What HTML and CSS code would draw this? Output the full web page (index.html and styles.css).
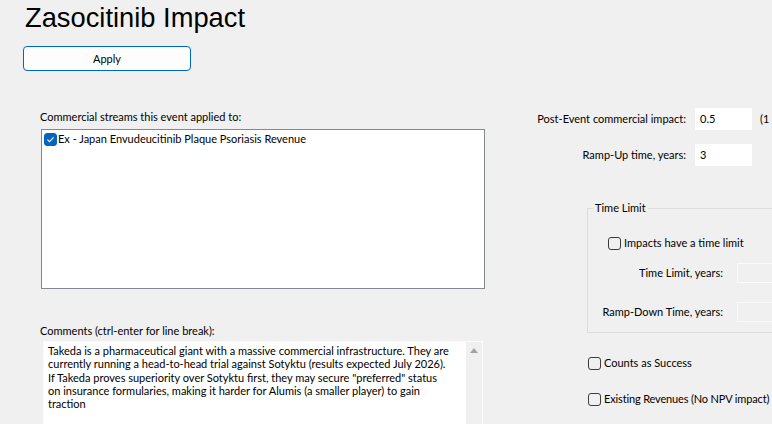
FILE: index.html
```html
<!DOCTYPE html>
<html>
<head>
<meta charset="utf-8">
<title>Zasocitinib Impact</title>
<link rel="stylesheet" href="styles.css">
</head>
<body>
<h1 class="title">Zasocitinib Impact</h1>
<div class="toolbar"><button class="btn" type="button">Apply</button></div>
<div class="main">
  <div class="left">
    <div class="label">Commercial streams this event applied to:</div>
    <div class="listbox">
      <div class="item"><span class="chk on"><svg width="13" height="13" viewBox="0 0 13 13"><path d="M3.4 6.7 L5.5 8.7 L9.6 4.3" fill="none" stroke="#fff" stroke-width="1.1"/></svg></span>Ex - Japan Envudeucitinib Plaque Psoriasis Revenue</div>
    </div>
    <div class="label comments-label">Comments (ctrl-enter for line break):</div>
    <div class="memo">
      <div class="memo-text">Takeda is a pharmaceutical giant with a massive commercial infrastructure. They are<br>currently running a head-to-head trial against Sotyktu (results expected July 2026).<br>If Takeda proves superiority over Sotyktu first, they may secure "preferred" status<br>on insurance formularies, making it harder for Alumis (a smaller player) to gain<br>traction</div>
      <div class="scroll"><span class="arrow"></span></div>
    </div>
  </div>
  <div class="right">
    <div class="field"><span class="flabel">Post-Event commercial impact:</span><span class="input">0.5</span><span class="hint">(1</span></div>
    <div class="field"><span class="flabel">Ramp-Up time, years:</span><span class="input">3</span></div>
    <fieldset class="group">
      <legend>Time Limit</legend>
      <div class="check"><span class="chk"></span>Impacts have a time limit</div>
      <div class="gfield first"><span class="glabel">Time Limit, years:</span><span class="input disabled"></span></div>
      <div class="gfield second"><span class="glabel">Ramp-Down Time, years:</span><span class="input disabled"></span></div>
    </fieldset>
    <div class="check outer success"><span class="chk"></span>Counts as Success</div>
    <div class="check outer existing"><span class="chk"></span>Existing Revenues (No NPV impact)</div>
  </div>
</div>
</body>
</html>
```
FILE: styles.css
```css
* { box-sizing: border-box; }
html, body { margin: 0; padding: 0; }
body {
  width: 772px;
  height: 424px;
  overflow: hidden;
  background: #f0f0f0;
  font-family: Lato, "Liberation Sans", sans-serif;
  font-size: 11px;
  line-height: 16px;
  color: #000;
}
.title {
  margin: 0;
  padding: 2px 0 0 25px;
  height: 34px;
  font-family: "Liberation Sans", Arial, sans-serif;
  font-weight: 400;
  font-size: 27.3px;
  line-height: 32px;
}
.toolbar { margin-top: 12px; padding-left: 23px; }
.btn {
  display: block;
  width: 168px;
  height: 25px;
  padding: 0;
  border: 1px solid #0067c0;
  border-radius: 4px;
  background: #fdfdfd;
  font: inherit;
  color: #000;
}
.main { display: flex; margin-top: 37px; }
.left {
  width: 446px;
  margin-left: 40px;
  padding-top: 1px;
  display: flex;
  flex-direction: column;
}
.listbox {
  margin: 4px 0 0 1px;
  width: 444px;
  height: 160px;
  border: 1px solid #828790;
  background: #fff;
  padding: 1px 2px;
}
.item { display: flex; align-items: center; height: 16px; white-space: nowrap; }
.chk {
  width: 13px;
  height: 13px;
  flex: none;
  border: 1px solid #3c3c3c;
  border-radius: 3px;
  margin-right: 3px;
}
.chk.on {
  background: #0067c0;
  border-color: #0067c0;
  display: flex;
  align-items: center;
  justify-content: center;
  margin-right: 1px;
}
.chk.on svg { display: block; flex: none; }
.comments-label { margin-top: 34px; }
.memo {
  margin: 2px 0 0 3px;
  width: 440px;
  height: 100px;
  border: 1px solid #fbfbfb;
  display: flex;
}
.memo-text {
  flex: 1;
  background: #fff;
  padding: 2px 0 0 4px;
  line-height: 13.3px;
  white-space: nowrap;
  overflow: hidden;
}
.scroll {
  width: 16px;
  flex: none;
  background: #f0f0f0;
  display: flex;
  justify-content: center;
  align-items: flex-start;
  padding-top: 6px;
}
.arrow {
  width: 0;
  height: 0;
  border-left: 4px solid transparent;
  border-right: 4px solid transparent;
  border-bottom: 5px solid #a3a3a3;
}
.right { margin-left: 34px; width: 252px; }
.field { display: flex; align-items: center; height: 22px; white-space: nowrap; }
.field + .field { margin-top: 14px; }
.flabel { width: 166px; text-align: right; margin-right: 9px; flex: none; }
.input {
  width: 57px;
  height: 22px;
  flex: none;
  background: #fff;
  padding-left: 5px;
  line-height: 22px;
}
.hint { margin-left: 8px; }
.group {
  margin: 34px 0 0 67px;
  width: 186px;
  min-width: 0;
  border: 1px solid #dcdcdc;
  padding: 0 0 10px 0;
}
.group legend { margin-left: 5px; padding: 0 2px; line-height: 16px; }
.check { display: flex; align-items: center; height: 16px; white-space: nowrap; }
.group .check { margin-top: 19px; padding-left: 20px; }
.gfield { display: flex; align-items: center; white-space: nowrap; }
.gfield.first { margin-top: 12px; }
.gfield.second { margin-top: 19px; }
.glabel { width: 135px; flex: none; text-align: right; margin-right: 14px; }
.input.disabled {
  width: 60px;
  height: 20px;
  background: #f0f0f0;
  border: 1px solid #fafafa;
}
.check.outer { margin-left: 68px; }
.check.success { margin-top: 22px; }
.check.existing { margin-top: 20px; letter-spacing: -0.15px; }
```
